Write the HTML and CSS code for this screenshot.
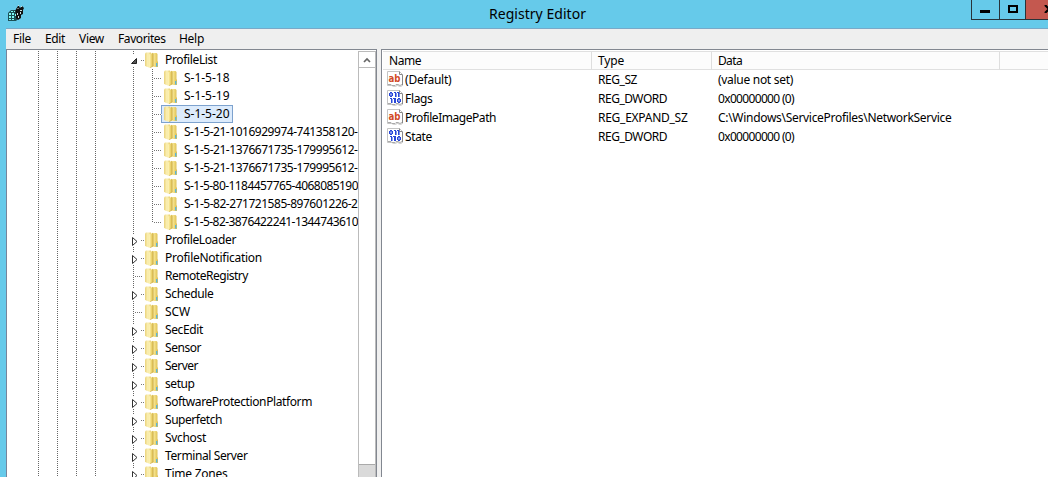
FILE: index.html
```html
<!DOCTYPE html>
<html lang="en">
<head>
<meta charset="utf-8">
<title>Registry Editor</title>
<link rel="stylesheet" href="styles.css">
</head>
<body>
<svg class="defs" aria-hidden="true">
  <defs>
    <linearGradient id="gold" x1="0" x2="1"><stop offset="0" stop-color="#fff6c0"/><stop offset=".5" stop-color="#f2dc7c"/><stop offset="1" stop-color="#d9bb50"/></linearGradient>
    <linearGradient id="pale" x1="0" x2="1"><stop offset="0" stop-color="#ead27a"/><stop offset=".5" stop-color="#fcf2b8"/><stop offset="1" stop-color="#e8cf70"/></linearGradient>
    <symbol id="folder" viewBox="0 0 14 16">
      <path d="M7 1h4.500l1 1v7l.5 1v5H7z" fill="url(#gold)"/>
      <path d="M0 1.500L1 .5h5v13l-2 2-3-1-1-1z" fill="url(#pale)"/>
      <path d="M4 2.500L8 .7V14l-3.500 2-.5-1z" fill="url(#gold)"/>
      <path d="M8.200 1.500V14l-3 1.600" fill="none" stroke="#c8a741" stroke-width=".7"/>
      <path d="M11.700 11v3.500" stroke="#52b4e4" stroke-width="1.300"/>
    </symbol>
    <symbol id="page" viewBox="0 0 16 16">
      <path d="M.5 .5h12l3 3v11l-2 1-3-1-3 1-3-1H.5z" fill="#fff" stroke="#c4c4c4"/>
      <path d="M12.500 .5v3h3M15.500 4v10" fill="none" stroke="#888"/>
      <path d="M1 13.500h3l1 1h3l1-1h2l2 1 2-1" fill="none" stroke="#aaa"/>
    </symbol>
    <symbol id="binary" viewBox="0 0 16 16">
      <path d="M3 2h2v1h1v3H5v1H3V6H2V3h1zM7 2h2v5H8V3H7zM10 2h2v5h-1V3h-1z" fill="#2746d8"/>
      <path d="M3 8h2v5H4V9H3zM6 8h3v5H7V9H6zM11 8h2v1h1v3h-1v1h-2v-1h-1V9h1z" fill="#2746d8"/>
      <path d="M8 3h1.600v4H8zM11 3h1.600v4H11zM4 9h1.500v4H4z" fill="#2746d8"/>
      <path d="M3.500 3.500h1v2h-1zM11.500 9.500h1v2h-1z" fill="#fff"/>
    </symbol>
  </defs>
</svg>
<div class="window">
  <header class="titlebar">
    <svg class="app-icon" viewBox="0 0 16 16">
      <path d="M0 8l3-3h5l2 2v7l-2 2H0z" fill="#1c5055"/>
      <path d="M1 8h2v2H1zM4 8h2v2H4zM7 9h1v2H7zM1 11h2v2H1zM4 11h2v2H4zM3 6h2v1H3zM6 6h2v1H6zM1 14h2v1H1zM4 14h2v1H4z" fill="#7ffaf4"/>
      <path d="M8 4l2-3h1l1 2 2-2 2 2-1 2v4l-2 1v3l-3 2-2-2V8L7 7z" fill="#111"/>
      <path d="M9 4l1-1 1 1zM12 5h2v1h-2zM9 8h1v2H9zM12 7h1v2h-1zM10 11h1v2h-1zM10 0h1v1h-1zM13 1h1v1h-1z" fill="#c8dede"/>
    </svg>
    <h1 class="title"><span data-width="97">Registry Editor</span></h1>
    <div class="controls">
      <span class="control"><i class="minimize"></i></span>
      <span class="control"><i class="maximize"></i></span>
      <span class="control close"><svg viewBox="0 0 10 8"><path d="M1 0l8 8M9 0L1 8" stroke="#000" stroke-width="2.200"/></svg></span>
    </div>
  </header>
  <nav class="menu">
    <div class="m-file"><span data-width="18">File</span></div>
    <div class="m-edit"><span data-width="20">Edit</span></div>
    <div class="m-view"><span data-width="25">View</span></div>
    <div class="m-fav"><span data-width="47.500">Favorites</span></div>
    <div><span data-width="25">Help</span></div>
  </nav>
  <main class="panes">
    <section class="tree-pane">
      <div class="tree" id="tree"></div>
      <div class="scrollbar"><div class="scroll-up"><svg viewBox="0 0 8 6"><path d="M1 5l3-3 3 3" fill="none" stroke="#666" stroke-width="1.700"/></svg></div><div class="thumb"></div></div>
    </section>
    <section class="list">
      <div class="row head">
        <div><span data-width="32">Name</span></div>
        <div><span data-width="26">Type</span></div>
        <div><span data-width="24">Data</span></div>
      </div>
      <div id="values"></div>
    </section>
  </main>
</div>
<script src="app.js"></script>
</body>
</html>
```

FILE: styles.css
```css
* { box-sizing: border-box; }
body { margin: 0; overflow: hidden; font: 12px/18px "Noto Sans", "Open Sans", sans-serif; color: #000; background: #66caea; }
.defs { position: absolute; width: 0; height: 0; }
.window { height: 477px; padding-left: 6px; display: flex; flex-direction: column; }
.titlebar { height: 29px; flex: none; display: flex; align-items: flex-start; border-bottom: 1px solid #79a9c8; }
.app-icon { width: 16px; height: 16px; margin: 5px 0 0 2px; }
.title { margin: 0 0 0 465px; padding-top: 4px; font-size: 14px; line-height: 20px; font-weight: 400; width: 98px; white-space: nowrap; }
.controls { margin-left: auto; display: flex; height: 20px; width: 77px; border: solid #28333a; border-width: 0 0 1px 1px; overflow: hidden; }
.control { flex: none; width: 28px; border-right: 1px solid #28333a; display: flex; justify-content: center; }
.control:first-child { padding-right: 1px; }
.control + .control { width: 26px; }
.control.close { width: 45px; background: #c4584f; border: 0; }
.control.close svg { width: 10px; height: 8px; margin-top: 5px; }
.minimize { width: 10px; height: 3px; background: #000; margin-top: 10px; }
.maximize { width: 10px; height: 8px; border: 2px solid #000; margin-top: 5px; }
.menu { height: 20px; flex: none; background: #efefef; padding-left: 7px; display: flex; line-height: 20px; white-space: nowrap; }
.m-file { width: 32px; }
.m-edit { width: 34px; }
.m-view { width: 39px; }
.m-fav { width: 61px; }
.panes { flex: 1; min-height: 0; display: flex; background: #f0f0f0; }
.tree-pane { width: 371px; flex: none; border: solid #828790; border-width: 1px 1px 0 1px; border-left-color: #77859c; background: #fff; display: flex; overflow: hidden; margin-right: 4px; }
.tree { flex: 1; min-width: 0; overflow: hidden; padding: 1px 0 0 22px; }
.node { height: 18px; display: flex; white-space: nowrap; }
.cell { width: 19px; height: 18px; flex: none; position: relative; }
.guide { background: repeating-linear-gradient(#666 0 1px, #fff 1px 2px) 9px 0 / 1px 18px no-repeat; }
.guide.end { background-size: 1px 10px; }
.branch::after { content: ""; position: absolute; left: 11px; top: 9px; width: 8px; height: 1px; background: repeating-linear-gradient(90deg, #777 0 1px, #fff 1px 2px); }
.open > .branch::after, .closed > .branch::after { left: 17px; width: 4px; }
.arrow { position: absolute; left: 6px; top: 4px; width: 9px; height: 12px; background: #fff; }
.item { display: flex; height: 18px; margin-left: -1px; padding: 0 3px 0 3px; }
.folder { width: 14px; height: 16px; margin-top: 1px; flex: none; }
.label { margin-left: 6px; }
.selected .item { background: #dcebfc; outline: 1px solid #7da2ce; outline-offset: -1px; }
.scrollbar { width: 18px; flex: none; border: solid #bbb; border-width: 0 1px; display: flex; flex-direction: column; background: #fff; margin-top: 1px; }
.scroll-up { height: 17px; flex: none; border: solid #bbb; border-width: 1px 0; display: flex; justify-content: center; align-items: center; }
.scroll-up svg { width: 8px; height: 6px; }
.thumb { margin-top: 396px; height: 20px; flex: none; background: #dadada; border-top: 1px solid #aaa; }
.list { flex: 1; min-width: 0; background: #fff; border: solid #828790; border-width: 1px 0 0 1px; padding: 1px 0 0 1px; }
.row { display: grid; grid-template-columns: 209px 120px 288px; height: 19px; line-height: 19px; white-space: nowrap; }
.row > div { padding-left: 6px; }
.head { background: #fcfcfc; border: solid #e0e0e0; border-width: 1px 0; line-height: 18px; }
.head > div { border-right: 1px solid #dedede; }
.row > .name { padding-left: 4px; display: flex; }
.name svg { width: 16px; height: 16px; margin: 1px 2px 0 0; flex: none; }
.ab { font: bold 11px/12px "DejaVu Sans", sans-serif; fill: #d24a26; }
```

FILE: app.js
```js
// Each entry: label, kind of node, label width in pixels.
const keys = [
  ["ProfileList", "open", 52],
  ["S-1-5-18", "child", 45.5], ["S-1-5-19", "child", 45.5], ["S-1-5-20", "child selected", 45.5],
  ["S-1-5-21-1016929974-741358120-", "child", 173.5], ["S-1-5-21-1376671735-179995612-", "child", 173.5],
  ["S-1-5-21-1376671735-179995612-", "child", 173.5], ["S-1-5-80-1184457765-4068085190", "child", 174],
  ["S-1-5-82-271721585-897601226-2", "child", 173.5], ["S-1-5-82-3876422241-1344743610", "child last", 174],
  ["ProfileLoader", "closed", 71], ["ProfileNotification", "closed", 97], ["RemoteRegistry", "leaf", 83],
  ["Schedule", "closed", 48.5], ["SCW", "leaf", 25], ["SecEdit", "closed", 38], ["Sensor", "closed", 36],
  ["Server", "closed", 33], ["setup", "closed", 29.5], ["SoftwareProtectionPlatform", "closed", 147],
  ["Superfetch", "closed", 57], ["Svchost", "closed", 41], ["Terminal Server", "closed", 82.5], ["Time Zones", "closed", 62.5]
];
const arrows = {
  open: '<svg class="arrow" viewBox="0 0 9 12"><path d="M6.500 3.500v5h-5z" fill="#555" stroke="#222"/></svg>',
  closed: '<svg class="arrow" viewBox="0 0 9 12"><path d="M2.500 2.500v8l4.500-4z" fill="#fff" stroke="#333"/></svg>',
  leaf: ""
};
const guide = '<span class="cell guide"></span>';
document.getElementById("tree").innerHTML = keys.map(([name, kind, width]) => {
  const child = kind.startsWith("child");
  const branch = child
    ? guide + `<span class="cell guide branch ${kind.includes("last") ? "end" : ""}"></span>`
    : `<span class="cell guide branch">${arrows[kind]}</span>`;
  return `<div class="node ${kind}">${guide.repeat(4)}<span class="cell"></span>${branch}<span class="item"><svg class="folder"><use href="#folder"/></svg><span class="label" data-width="${width}">${name}</span></span></div>`;
}).join("");

const values = [
  [["(Default)", 46.5], ["REG_SZ", 39], ["(value not set)", 75], "text"],
  [["Flags", 27.5], ["REG_DWORD", 69], ["0x00000000 (0)", 76], "binary"],
  [["ProfileImagePath", 91], ["REG_EXPAND_SZ", 89.5], ["C:\\Windows\\ServiceProfiles\\NetworkService", 233.5], "text"],
  [["State", 27], ["REG_DWORD", 69], ["0x00000000 (0)", 76], "binary"]
];
const span = ([text, width]) => `<span data-width="${width}">${text}</span>`;
document.getElementById("values").innerHTML = values.map(([name, type, data, icon]) => {
  const mark = icon === "text" ? '<text class="ab" x="1.500" y="10.500" textLength="12" lengthAdjust="spacingAndGlyphs">ab</text>' : '<use href="#binary"/>';
  return `<div class="row"><div class="name"><svg viewBox="0 0 16 16"><use href="#page"/>${mark}</svg>${span(name)}</div><div>${span(type)}</div><div>${span(data)}</div></div>`;
}).join("");

// Track each label so that it fills its given width.
for (const el of document.querySelectorAll("[data-width]")) {
  const gap = Number(el.dataset.width) - el.getBoundingClientRect().width;
  el.style.letterSpacing = `${gap / el.textContent.length}px`;
}
```
